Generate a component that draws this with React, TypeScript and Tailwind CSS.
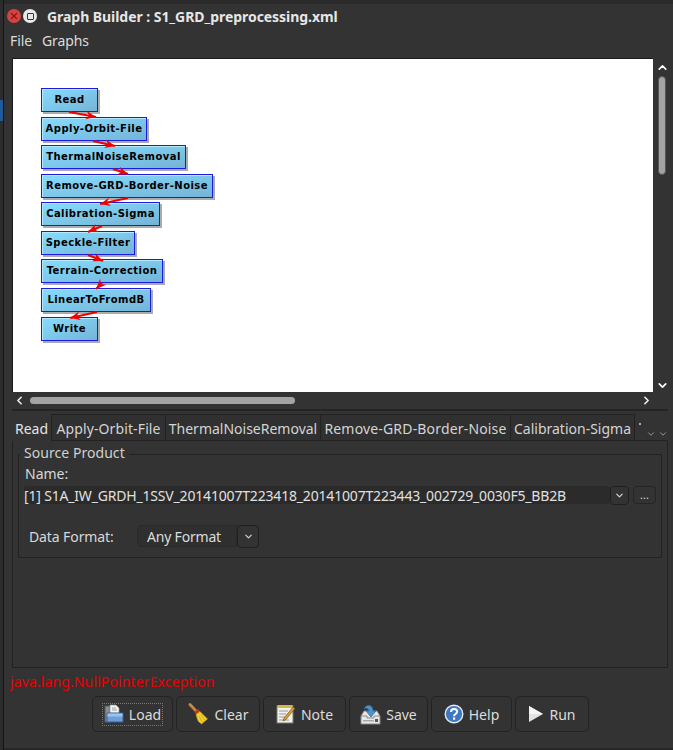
import React from "react";
import { ChevronDown, ChevronLeft, ChevronRight, ChevronUp } from "lucide-react";

const nodes = [
  { label: "Read", top: 29, width: 57 },
  { label: "Apply-Orbit-File", top: 58, width: 106 },
  { label: "ThermalNoiseRemoval", top: 86, width: 145 },
  { label: "Remove-GRD-Border-Noise", top: 115, width: 172 },
  { label: "Calibration-Sigma", top: 143, width: 119 },
  { label: "Speckle-Filter", top: 172, width: 94 },
  { label: "Terrain-Correction", top: 200, width: 122 },
  { label: "LinearToFromdB", top: 229, width: 110 },
  { label: "Write", top: 258, width: 57 },
];

// start and end of each connection, in canvas pixels
const arrows = [
  [56, 53, 83, 58],
  [80, 82, 102, 87],
  [100, 110, 115, 115],
  [115, 139, 87, 145],
  [89, 167, 75, 173],
  [75, 196, 90, 202],
  [89, 224, 83, 230],
  [84, 253, 57, 259],
];

const tabs = [
  { label: "Read", width: "w-[40px]", active: true, extra: "" },
  { label: "Apply-Orbit-File", width: "w-[114px]", extra: "tracking-[0.12px]" },
  { label: "ThermalNoiseRemoval", width: "w-[155px]", extra: "" },
  { label: "Remove-GRD-Border-Noise", width: "w-[190px]", extra: "tracking-[0.17px]" },
  { label: "Calibration-Sigma", width: "w-[124px]", extra: "" },
];

function FolderIcon() {
  return (
    <svg width="20" height="20" viewBox="0 0 20 20">
      <rect x="1" y="2" width="5" height="16" fill="#8a8f96" stroke="#55595f" />
      <path d="M6 1h6l3 3v6H6z" fill="#f4f4f4" stroke="#9a9a9a" strokeWidth="0.7" />
      <path d="M8 4h4M8 6h5" stroke="#8a8a8a" strokeWidth="0.8" />
      <path d="M3 9h16v9H3z" fill="#6f9fd8" stroke="#2f5f9f" />
      <path d="M3.5 9.5h15v3h-15z" fill="#9fc2ea" />
    </svg>
  );
}

function BroomIcon() {
  return (
    <svg width="22" height="22" viewBox="0 0 22 22">
      <path d="M2 1.500l6.500 7" stroke="#c08a4a" strokeWidth="2.800" strokeLinecap="round" />
      <path d="M6.500 8.500l4-2.500 1.500 2.500-4 3z" fill="#d03028" />
      <path d="M8 11.500l4-3 7.500 7.500-6 5-3-2.500-1-2z" fill="#f0d030" stroke="#c0a018" strokeWidth="0.6" />
      <path d="M11 13l3.500 6M13 11.500l4 6" stroke="#c0a018" strokeWidth="0.7" />
    </svg>
  );
}

function NoteIcon() {
  return (
    <svg width="20" height="20" viewBox="0 0 20 20">
      <rect x="1" y="2" width="16" height="17" fill="#f2f2ea" stroke="#77776f" />
      <path d="M1.500 1h15v3h-15z" fill="#d9b64a" />
      <path d="M3 7h9M3 10h7M3 13h6M3 16h10" stroke="#8f8f8f" strokeWidth="0.9" />
      <path d="M8 14l9-11 2 1.500-9 11-3 1.500z" fill="#d99a3a" stroke="#6a4a1a" strokeWidth="0.6" />
    </svg>
  );
}

function SaveIcon() {
  return (
    <svg width="21" height="21" viewBox="0 0 21 21">
      <path d="M1 12l3-5h13l3 5v8H1z" fill="#e8e8e8" stroke="#8a8a8a" />
      <path d="M1 12h6v2h7v-2h6" fill="none" stroke="#8a8a8a" />
      <rect x="3" y="16" width="11" height="1.500" fill="#a8a8a8" />
      <rect x="15" y="15" width="3" height="3" fill="#555" />
      <path d="M4 5c2-5 8-5 9 1v1h3l-5 6-5-6h3c0-2-3-4-5-2z" fill="#4c93c9" stroke="#2a6a9f" strokeWidth="0.7" />
    </svg>
  );
}

function HelpIcon() {
  return (
    <svg width="20" height="20" viewBox="0 0 20 20">
      <circle cx="10" cy="10" r="8.800" fill="#3f78c0" stroke="#e4e8f0" strokeWidth="1.400" />
      <path d="M7 8c0-4 6.200-4 6.200-.4 0 2.400-3.200 2.400-3.200 4.600" fill="none" stroke="#ffffff" strokeWidth="2" />
      <rect x="9" y="13.500" width="2.200" height="2.200" fill="#ffffff" />
    </svg>
  );
}

function RunIcon() {
  return (
    <svg width="16" height="18" viewBox="0 0 16 18">
      <path d="M1 1l14 8-14 8z" fill="#e2e2e2" />
      <path d="M1 1l14 8H1z" fill="#f4f4f4" />
    </svg>
  );
}

function ActionButton({ label, icon, width, focused }: { label: string; icon: React.ReactNode; width: string; focused?: boolean }) {
  return (
    <button className={`flex h-[36px] items-center justify-center rounded-[5px] border border-[#232323] bg-[#333333] text-[14px] text-[#dcdcdc] ${width}`}>
      <span className={focused ? "flex items-center gap-[5px] border border-dotted border-[#777777] px-px" : "flex items-center gap-[5px]"}>
        {icon}
        {label}
      </span>
    </button>
  );
}

export default function App() {
  return (
    <div className="flex h-[750px] w-[673px] overflow-hidden bg-[#333333] font-['Noto_Sans',sans-serif] text-[14px] text-[#d8d8d8]">
      {/* edge of the desktop behind the window */}
      <div className="flex w-[4px] shrink-0 flex-col border-r border-[#141414] bg-[#2c2c2c]">
        <div className="h-[100px]" />
        <div className="h-[21px] bg-[#1f5a9a]" />
      </div>

      <div className="flex w-[669px] flex-col border-b-2 border-[#262626]">
        <div className="h-[4px] shrink-0 bg-[#2a2a2a]" />

        {/* title bar */}
        <div className="flex h-[26px] shrink-0 items-center pb-[2px] pl-[3px]">
          <span className="flex h-[14px] w-[14px] items-center justify-center rounded-full bg-[#d9413e] text-[#7a1c1a]">
            <svg width="8" height="8" viewBox="0 0 8 8"><path d="M1 1l6 6M7 1l-6 6" stroke="currentColor" strokeWidth="1.200" /></svg>
          </span>
          <span className="ml-[2px] flex h-[14px] w-[14px] items-center justify-center rounded-full bg-[#e8e8e8]">
            <span className="h-[7px] w-[7px] rounded-[1px] border border-[#333333]" />
          </span>
          <span className="ml-[10px] text-[14px] font-bold tracking-[-0.05px] text-[#e6e6e6]">Graph Builder : S1_GRD_preprocessing.xml</span>
        </div>

        {/* menu */}
        <div className="flex h-[22px] shrink-0 items-center gap-[10px] pb-[2px] pl-[6px] text-[14px] tracking-[-0.1px] text-[#dcdcdc]">
          <span>File</span>
          <span>Graphs</span>
        </div>

        {/* graph canvas */}
        <div className="mt-[6px] flex h-[334px] shrink-0 pl-[8px]">
          <div className="relative w-[641px] border-t border-l border-[#1a1a1a] bg-white font-['DejaVu_Sans',sans-serif]">
            {nodes.map((n) => (
              <div
                key={n.label}
                style={{ top: n.top, width: n.width }}
                className="absolute left-[28px] flex h-[24px] items-center justify-center border border-[#1a1ae0] bg-gradient-to-br from-[#86dcff] to-[#74b4d6] pb-[2px] text-[10px] font-bold tracking-[0.45px] text-black shadow-[inset_1px_1px_0_#b4eaff,2px_2px_0_#ababab]"
              >
                {n.label}
              </div>
            ))}
            <svg className="absolute inset-0" width="641" height="333">
              {arrows.map(([x1, y1, x2, y2]) => {
                const a = Math.atan2(y2 - y1, x2 - x1);
                const p = (d: number, s: number) =>
                  `${x2 - 11 * Math.cos(a + s * d)},${y2 - 11 * Math.sin(a + s * d)}`;
                return (
                  <g key={x1 + "-" + y1}>
                    <line x1={x1} y1={y1} x2={x2} y2={y2} stroke="#f00000" strokeWidth="2.200" />
                    <polygon points={`${x2},${y2} ${p(0.4, 1)} ${x2 - 7 * Math.cos(a)},${y2 - 7 * Math.sin(a)} ${p(0.4, -1)}`} fill="#f00000" />
                  </g>
                );
              })}
            </svg>
          </div>
          <div className="flex w-[20px] flex-col items-center pr-[2px]">
            <ChevronUp size={13} strokeWidth={3} className="mt-[3px] text-white" />
            <div className="mt-[2px] h-[99px] w-[8px] rounded-full border border-[#555555] bg-[#a3a3a3]" />
            <div className="flex-1" />
            <ChevronDown size={13} strokeWidth={3} className="text-white" />
          </div>
        </div>

        {/* horizontal scrollbar */}
        <div className="flex h-[17px] shrink-0 items-center pr-[20px] pl-[9px]">
          <ChevronLeft size={13} strokeWidth={3} className="text-[#eeeeee]" />
          <div className="ml-[4px] h-[7px] w-[265px] rounded-full bg-[#a3a3a3]" />
          <div className="flex-1" />
          <ChevronRight size={13} strokeWidth={3} className="text-[#eeeeee]" />
        </div>
        <div className="mr-[5px] ml-[8px] h-[3px] shrink-0 border-t-2 border-[#242424]" />

        {/* tabs */}
        <div className="mt-[2px] mr-[5px] ml-[8px] flex h-[27px] shrink-0 items-stretch">
          {tabs.map((t) => (
            <div
              key={t.label}
              className={`flex ${t.width} items-center justify-center border-r border-[#222222] pt-[2px] text-[14px] ${t.extra} ${t.active ? "text-[#e4e4e4]" : "border-t border-b bg-[#303030] text-[#d4d4d4]"}`}
            >
              {t.label}
            </div>
          ))}
          <div className="relative flex-1 border-b border-[#222222] text-[#aaaaaa]">
            <span className="absolute top-[9px] left-[4px] h-[2px] w-[2px] bg-[#aaaaaa]" />
            <div className="absolute top-[15px] right-0 flex gap-[2px]">
              <ChevronDown size={10} strokeWidth={2} />
              <ChevronDown size={10} strokeWidth={2} />
            </div>
          </div>
        </div>

        {/* operator panel */}
        <div className="mr-[5px] ml-[8px] flex h-[227px] shrink-0 flex-col border border-t-0 border-[#222222] px-[5px]">
          <div className="relative mt-[13px] h-[104px] border border-[#222222] px-[5px] pt-[10px]">
            <span className="absolute -top-[13px] left-px bg-[#333333] px-[4px] text-[14px] tracking-[0.05px] text-[#d0d0d0]">Source Product</span>
            <div className="mb-[3px] pl-px text-[14px] leading-[18px]">Name:</div>
            <div className="flex h-[18px] items-center">
              <div className="flex h-[18px] w-[586px] items-center rounded-[3px] border-y border-[#2a2a2a] bg-[#2b2b2b] text-[14px] tracking-[-0.18px] whitespace-nowrap text-[#e0e0e0]">
                [1] S1A_IW_GRDH_1SSV_20141007T223418_20141007T223443_002729_0030F5_BB2B
              </div>
              <div className="flex h-[19px] w-[19px] items-center justify-center rounded-[4px] border border-[#1f1f1f]">
                <ChevronDown size={11} strokeWidth={2.500} />
              </div>
              <div className="ml-[4px] flex h-[18px] w-[23px] items-center justify-center rounded-[4px] border border-[#252525] text-[11px]">...</div>
            </div>
            <div className="mt-[21px] flex h-[22px] items-center pl-[5px]">
              <span className="w-[108px] text-[14px] tracking-[-0.1px]">Data Format:</span>
              <div className="flex h-[22px] w-[100px] items-center rounded-l-[4px] border border-[#2a2a2a] bg-[#2f2f2f] pl-[9px] text-[14px] tracking-[-0.2px] text-[#dcdcdc]">Any Format</div>
              <div className="flex h-[23px] w-[22px] items-center justify-center rounded-[4px] border border-[#1f1f1f]">
                <ChevronDown size={11} strokeWidth={2.500} />
              </div>
            </div>
          </div>
        </div>

        <div className="mt-[4px] h-[20px] shrink-0 pl-[6px] text-[14px] leading-[20px] tracking-[0.12px] text-[#e80000]">java.lang.NullPointerException</div>

        {/* actions */}
        <div className="mt-[4px] flex shrink-0 gap-[3px] pl-[88px]">
          <ActionButton label="Load" width="w-[81px]" focused icon={<FolderIcon />} />
          <ActionButton label="Clear" width="w-[84px]" icon={<BroomIcon />} />
          <ActionButton label="Note" width="w-[83px]" icon={<NoteIcon />} />
          <ActionButton label="Save" width="w-[79px]" icon={<SaveIcon />} />
          <ActionButton label="Help" width="w-[81px]" icon={<HelpIcon />} />
          <ActionButton label="Run" width="w-[74px]" icon={<RunIcon />} />
        </div>
      </div>
    </div>
  );
}
